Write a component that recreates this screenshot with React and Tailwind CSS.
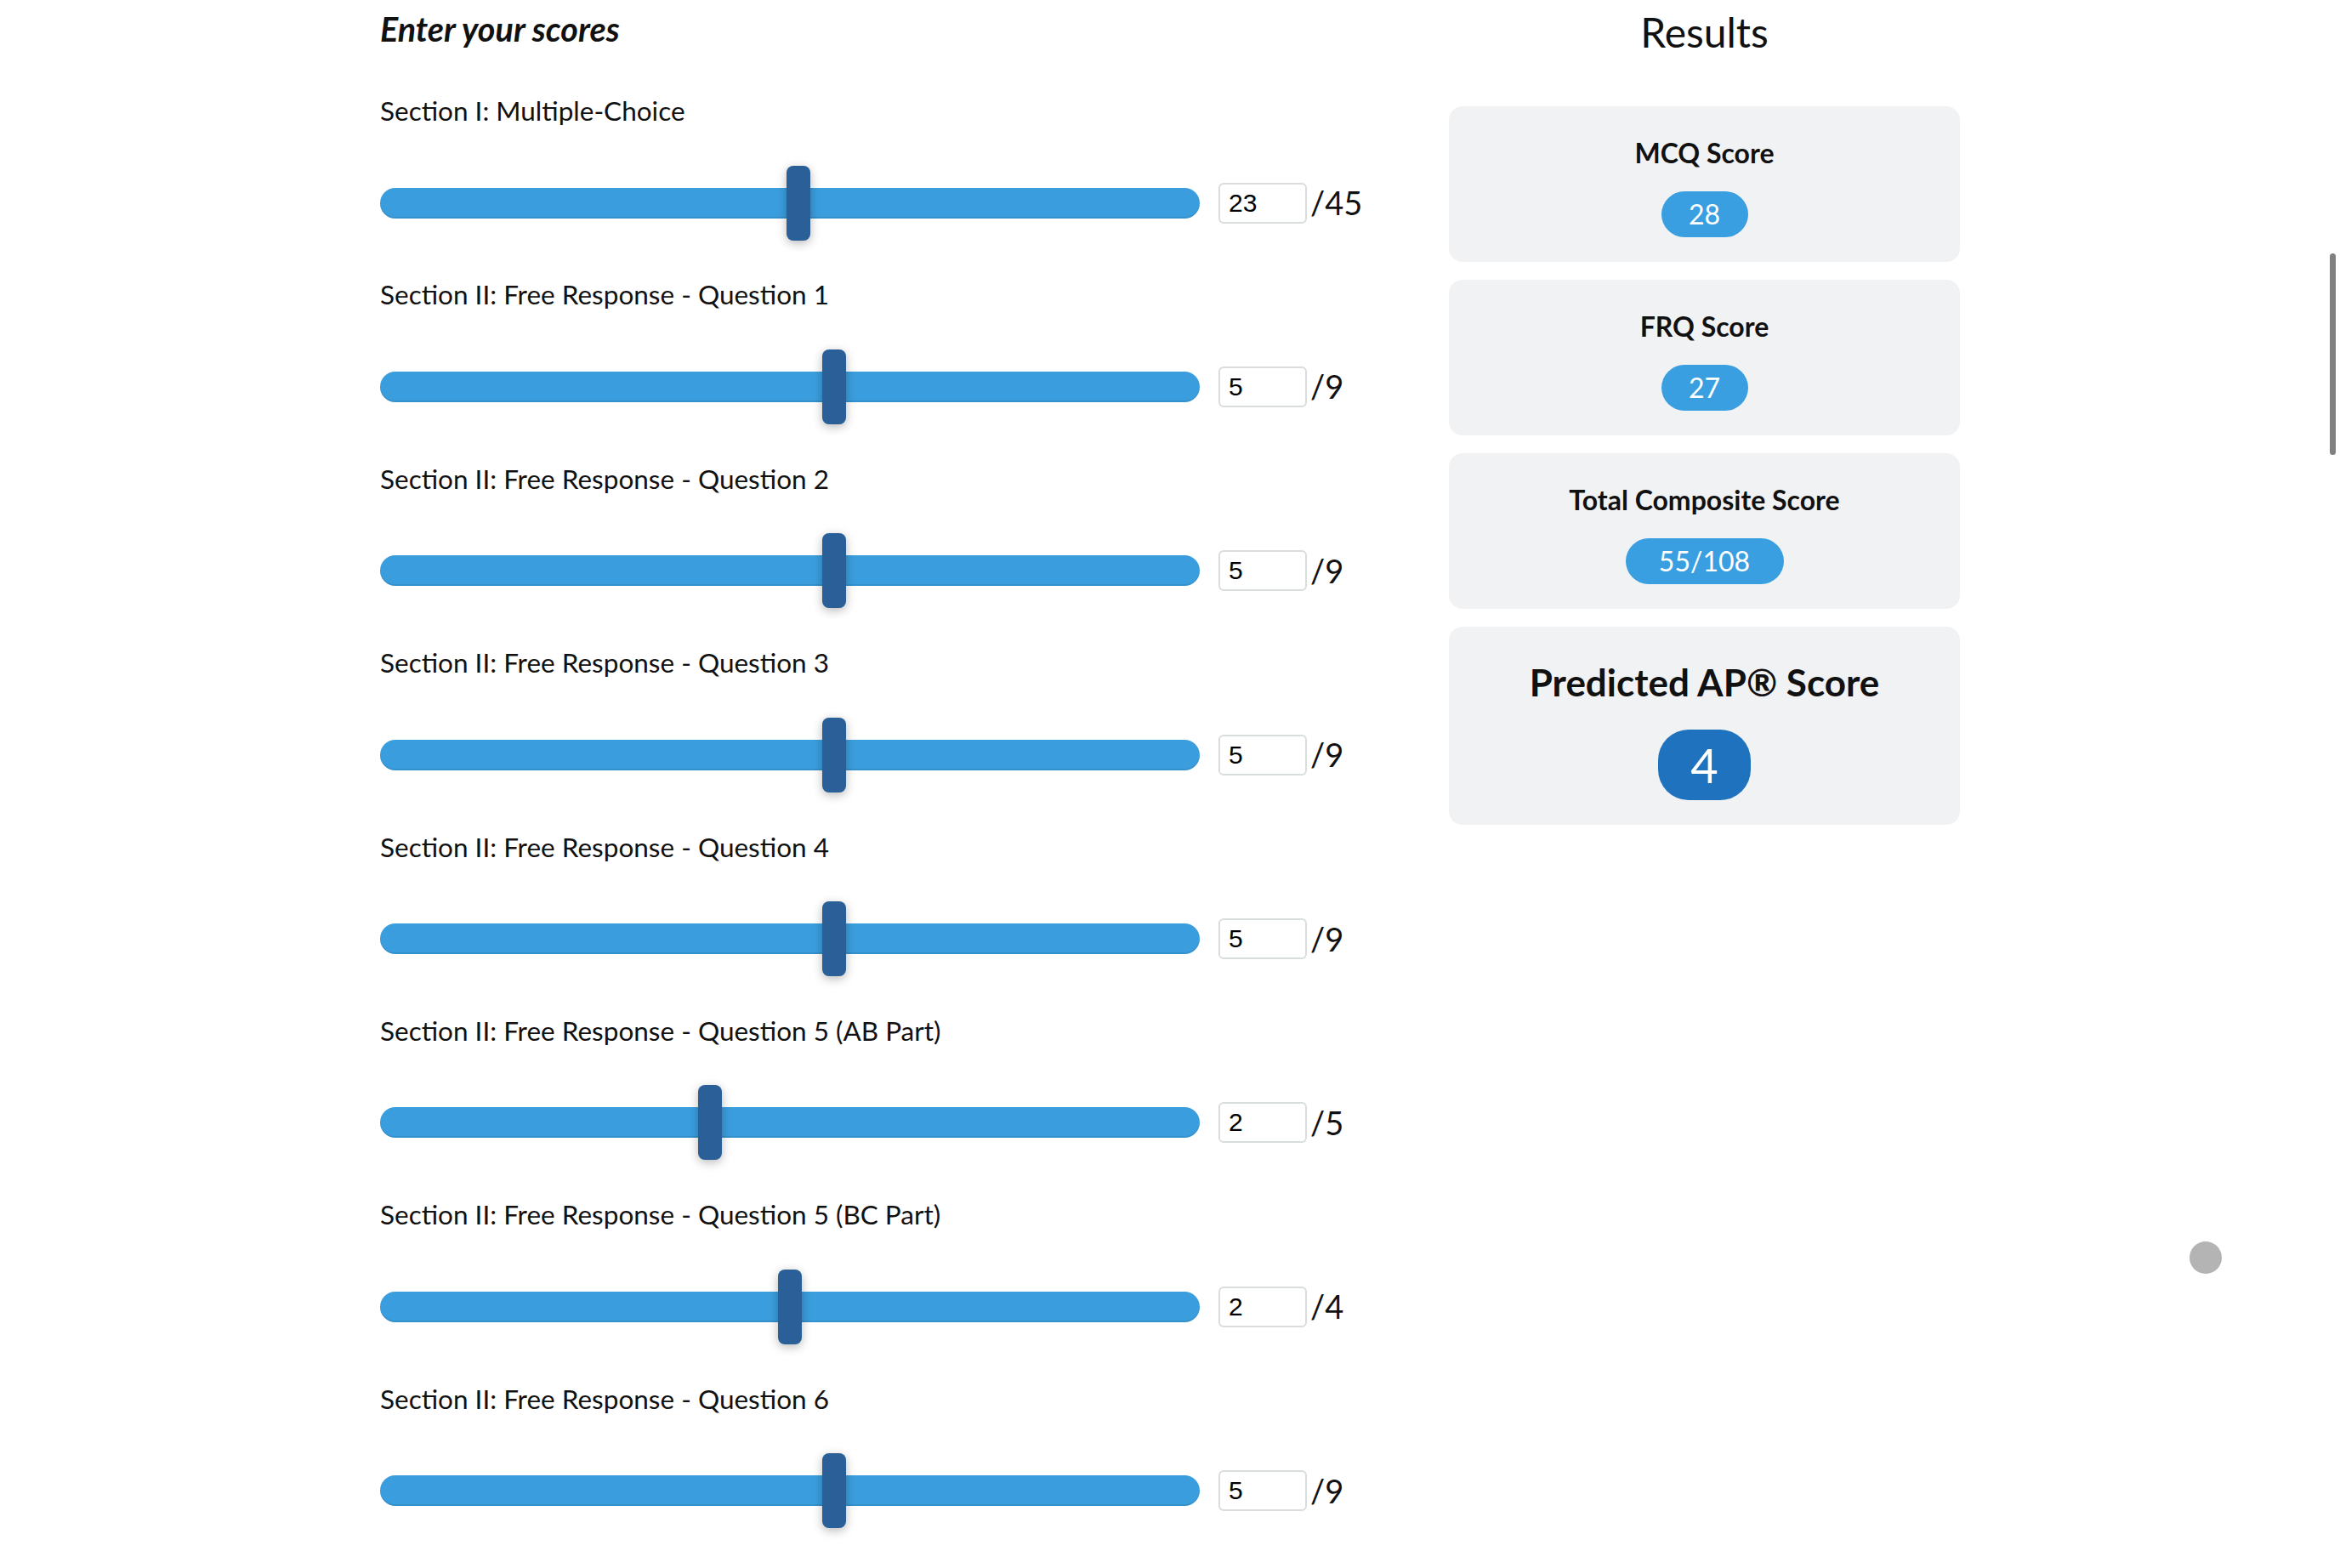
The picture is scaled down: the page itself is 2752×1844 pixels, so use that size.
import { useState } from "react";

const sections = [
  { label: "Section I: Multiple-Choice", max: 45, value: 23 },
  { label: "Section II: Free Response - Question 1", max: 9, value: 5 },
  { label: "Section II: Free Response - Question 2", max: 9, value: 5 },
  { label: "Section II: Free Response - Question 3", max: 9, value: 5 },
  { label: "Section II: Free Response - Question 4", max: 9, value: 5 },
  { label: "Section II: Free Response - Question 5 (AB Part)", max: 5, value: 2 },
  { label: "Section II: Free Response - Question 5 (BC Part)", max: 4, value: 2 },
  { label: "Section II: Free Response - Question 6", max: 9, value: 5 },
];

function ScoreRow({ label, max, value, onChange }) {
  return (
    <div className="pb-[39.9px]">
      <div className="h-[48px] leading-[48px] text-[31.5px] text-[#111]">{label}</div>
      <div className="mt-[40.5px] h-[88px] flex items-center">
        <input
          type="range"
          min={0}
          max={max}
          value={value}
          onChange={(e) => onChange(Number(e.target.value))}
          className="w-[964px] h-[36px] appearance-none bg-transparent cursor-pointer [&::-webkit-slider-runnable-track]:h-[36px] [&::-webkit-slider-runnable-track]:rounded-full [&::-webkit-slider-runnable-track]:bg-[#3a9ede] [&::-webkit-slider-runnable-track]:shadow-[inset_0_-2px_0_rgba(0,0,0,0.08)] [&::-webkit-slider-thumb]:appearance-none [&::-webkit-slider-thumb]:w-[28px] [&::-webkit-slider-thumb]:h-[88px] [&::-webkit-slider-thumb]:mt-[-26px] [&::-webkit-slider-thumb]:rounded-[8px] [&::-webkit-slider-thumb]:bg-[#2a6097] [&::-webkit-slider-thumb]:shadow-[0_3px_12px_rgba(0,0,0,0.28)]"
        />
        <input
          type="text"
          value={value}
          onChange={(e) => {
            const n = Number(e.target.value);
            if (!Number.isNaN(n)) onChange(Math.max(0, Math.min(max, n)));
          }}
          className="ml-[22px] w-[104px] h-[48px] pl-[10px] border-2 border-[#dadddd] rounded-[6px] text-[30px] text-black font-['Liberation_Sans',Arial,sans-serif] outline-none"
        />
        <span className="ml-[4px] text-[38px] text-[#111]">/{max}</span>
      </div>
    </div>
  );
}

function ResultCard({ title, value, big }) {
  if (big) {
    return (
      <div className="bg-[#f1f2f4] rounded-[16px] flex flex-col items-center pt-[39px] pb-[29px]">
        <div className="text-[44px] leading-[53px] font-bold text-[#111]">{title}</div>
        <div className="mt-[29px] w-[109px] h-[83px] rounded-[36px] bg-[#1f72bd] text-white text-[56px] flex items-center justify-center">
          {value}
        </div>
      </div>
    );
  }
  return (
    <div className="bg-[#f1f2f4] rounded-[16px] flex flex-col items-center pt-[35.5px] pb-[29px]">
      <div className="text-[32px] leading-[38px] font-bold text-[#111]">{title}</div>
      <div
        className={`mt-[26.5px] h-[54px] rounded-full bg-[#3a9fe0] text-white text-[32px] flex items-center justify-center ${
          value.length > 3 ? "w-[186px]" : "w-[102px]"
        }`}
      >
        {value}
      </div>
    </div>
  );
}

export default function App() {
  const [values, setValues] = useState(sections.map((s) => s.value));

  const setValue = (i, v) => {
    setValues((prev) => prev.map((p, j) => (j === i ? v : p)));
  };

  return (
    <div className="relative min-h-screen bg-white font-['Lato',sans-serif] text-[#111]">
      <div className="mx-auto w-[1858px] flex">
        <div className="flex-1">
          <h2 className="pt-[10px] text-[39.5px] leading-[48px] font-bold italic">Enter your scores</h2>
          <div className="mt-[48px]">
            {sections.map((s, i) => (
              <ScoreRow
                key={s.label}
                label={s.label}
                max={s.max}
                value={values[i]}
                onChange={(v) => setValue(i, v)}
              />
            ))}
          </div>
        </div>

        <div className="w-[601px]">
          <h2 className="pt-[9px] text-[48px] leading-[58px] text-center">Results</h2>
          <div className="mt-[58px] flex flex-col gap-[21px]">
            <ResultCard title="MCQ Score" value="28" />
            <ResultCard title="FRQ Score" value="27" />
            <ResultCard title="Total Composite Score" value="55/108" />
            <ResultCard title="Predicted AP® Score" value="4" big />
          </div>
        </div>
      </div>

      {/* overlay scrollbar + floating button */}
      <div className="fixed top-[298px] right-[5px] w-[7px] h-[237px] rounded-full bg-[#808080]" />
      <div className="fixed top-[1460px] left-[2575px] w-[38px] h-[38px] rounded-full bg-[#b4b4b4]" />
    </div>
  );
}
